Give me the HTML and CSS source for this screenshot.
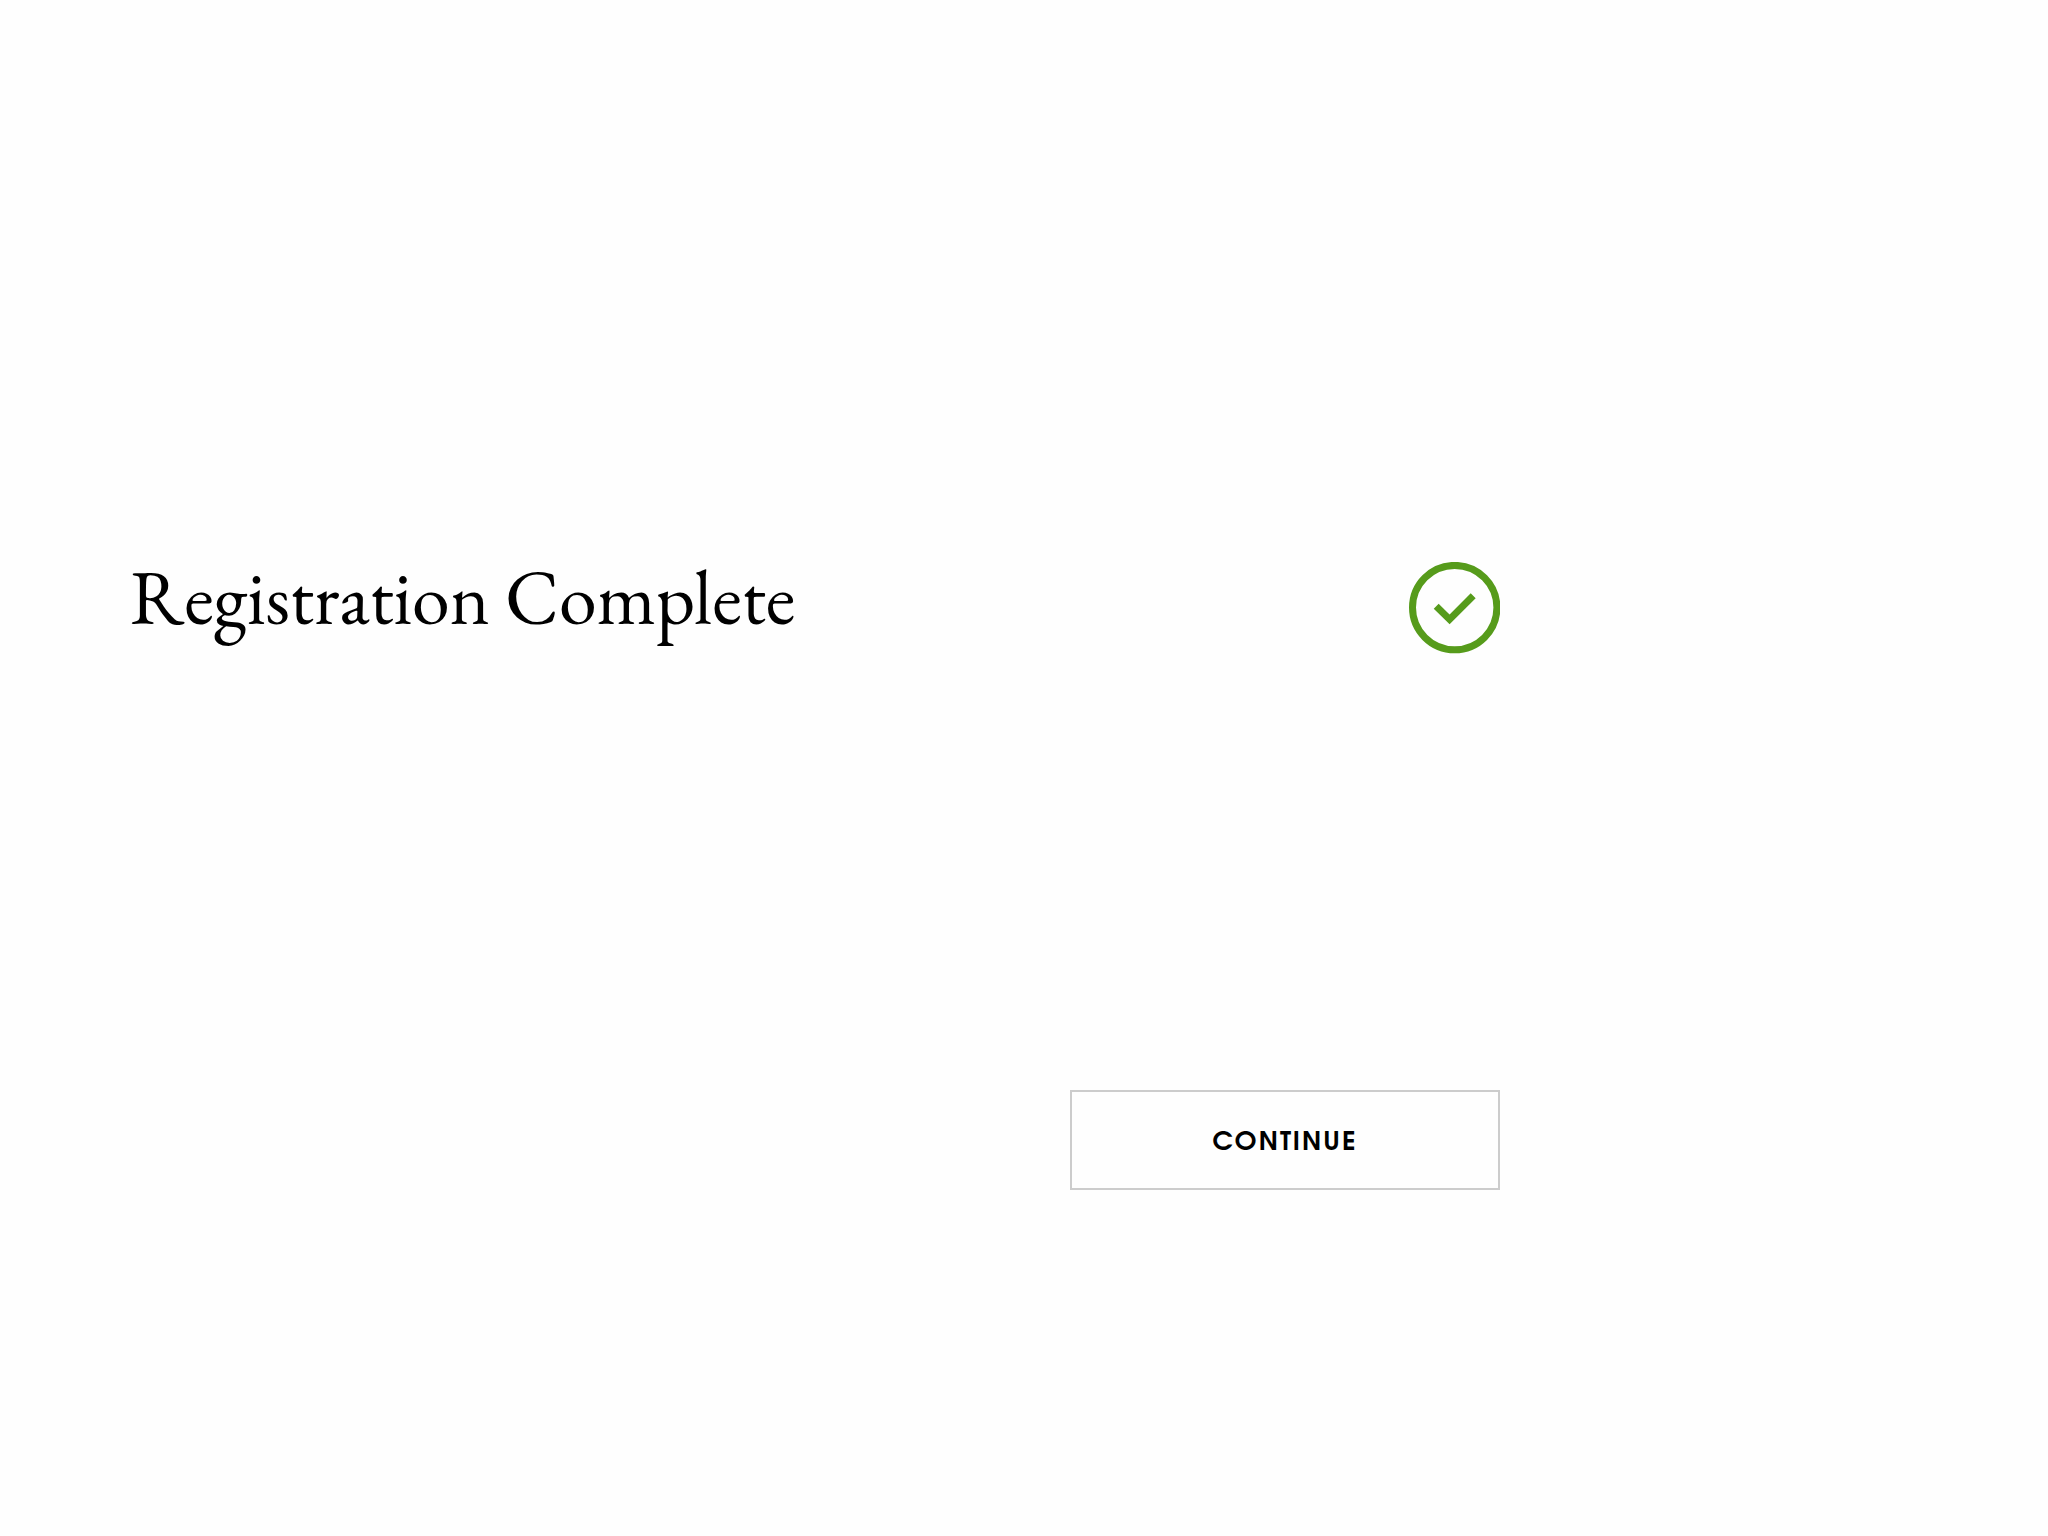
FILE: index.html
```html
<!DOCTYPE html>
<html lang="en">
<head>
<meta charset="utf-8">
<meta name="viewport" content="width=device-width, initial-scale=1">
<title>Registration Complete</title>
<link rel="stylesheet" href="styles.css">
</head>
<body>
<main class="confirmation">
  <header class="confirmation-header">
    <h1 class="confirmation-title">Registration Complete</h1>
    <svg class="confirmation-icon" viewBox="0 0 91 92" role="img" aria-label="Success">
      <circle cx="45.7" cy="45.6" r="42.2" fill="none" stroke="#569b1b" stroke-width="7"/>
      <path d="M27.2 44.2 40.6 57.4 64.2 33.8" fill="none" stroke="#569b1b" stroke-width="7"/>
    </svg>
  </header>
  <button class="continue-button" type="button">CONTINUE</button>
</main>
</body>
</html>
```

FILE: styles.css
```css
* {
  box-sizing: border-box;
}

body {
  margin: 0;
  background: #fefefe;
  color: #000;
}

.confirmation {
  display: flex;
  flex-direction: column;
  gap: 436px;
  max-width: 1500px;
  padding: 562px 0 64px 130px;
}

.confirmation-header {
  display: flex;
  align-items: flex-start;
  justify-content: space-between;
  gap: 32px;
}

.confirmation-title {
  margin: 0;
  font-family: "EB Garamond", "Liberation Serif", serif;
  font-size: 76px;
  font-weight: 400;
  line-height: 70px;
}

.confirmation-icon {
  flex: none;
  width: 91px;
  height: 92px;
}

.continue-button {
  align-self: flex-end;
  width: 430px;
  max-width: 100%;
  height: 100px;
  padding: 6px 0 0;
  border: 2px solid #ccc;
  background: #fefefe;
  color: #000;
  font-family: "ITC Avant Garde Gothic", "URW Gothic", "TeX Gyre Adventor", Lato, sans-serif;
  font-size: 26px;
  font-weight: 700;
  line-height: 32px;
  letter-spacing: 2px;
  cursor: pointer;
}
```
